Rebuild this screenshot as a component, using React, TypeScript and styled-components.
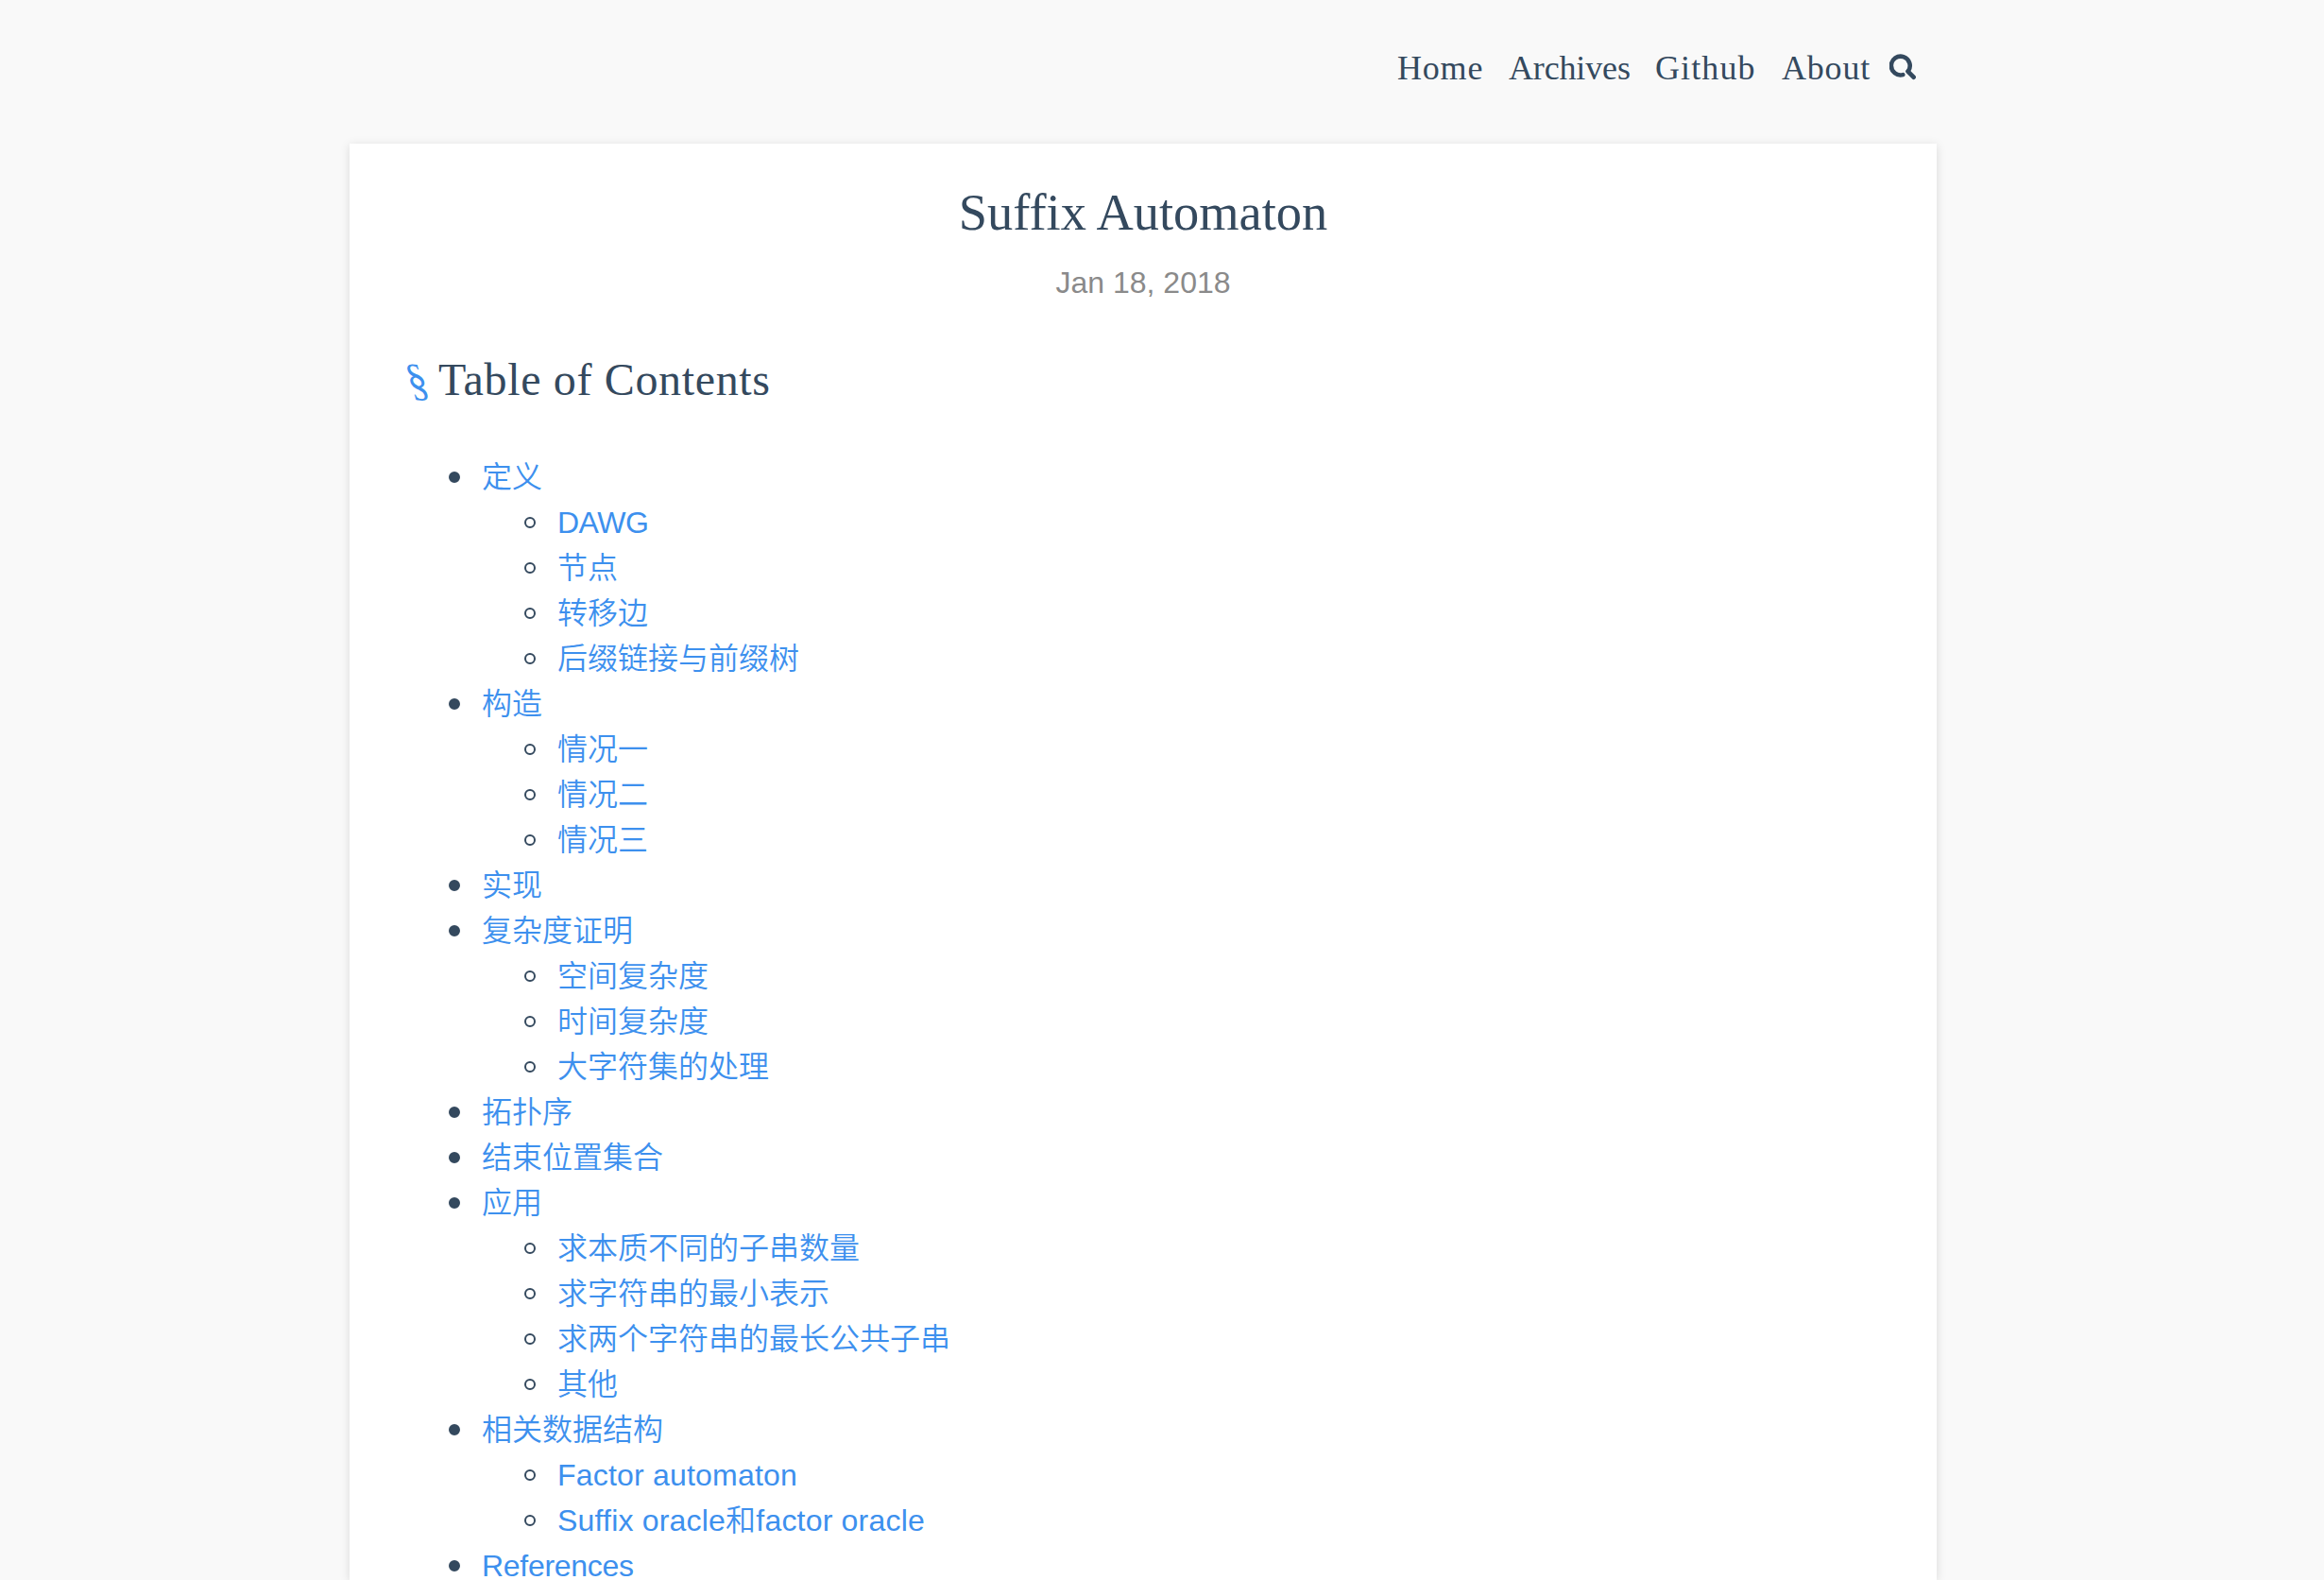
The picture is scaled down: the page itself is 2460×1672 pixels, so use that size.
import React from "react";
import styled, { createGlobalStyle } from "styled-components";

const GlobalStyle = createGlobalStyle`
  html { overflow: hidden; }
  body {
    margin: 0;
    height: 1672px;
    overflow: hidden;
    background: #f9f9f9;
    color: #34495e;
    font-family: "Liberation Sans", "Noto Sans CJK SC", sans-serif;
    font-size: 32px;
    line-height: 48px;
  }
`;

const serif = `"Liberation Serif", "Noto Sans CJK SC", serif`;

const Page = styled.div`
  width: 1680px;
  height: 1672px;
  margin-left: 370px;
`;

const Header = styled.header`
  display: flex;
  justify-content: flex-end;
  align-items: flex-start;
  height: 152px;
  box-sizing: border-box;
  padding: 48px 22px 0 0;
`;

const NavLink = styled.a<{ $width: number; $tracking: number }>`
  width: ${(p) => p.$width}px;
  font-family: ${serif};
  font-size: 36px;
  letter-spacing: ${(p) => p.$tracking}px;
  white-space: nowrap;
  color: #34495e;
  text-decoration: none;
`;

const SearchButton = styled.button`
  display: flex;
  margin: 9px 0 0;
  padding: 0;
  border: 0;
  background: none;
  color: #34495e;
`;

const Card = styled.main`
  box-sizing: border-box;
  height: 1520px;
  padding: 41px 60px 0;
  background: #fff;
  box-shadow: 0 2px 10px rgba(0, 0, 0, 0.13);
`;

const Title = styled.h1`
  margin: 0;
  font-family: ${serif};
  font-size: 54.4px;
  font-weight: 400;
  line-height: 64px;
  text-align: center;
`;

const PostDate = styled.div`
  margin-top: 18px;
  color: #8a8a8a;
  text-align: center;
`;

const SectionHeading = styled.h2`
  display: flex;
  margin: 47px 0 0;
  font-family: ${serif};
  font-size: 48px;
  font-weight: 400;
  line-height: 64px;
  letter-spacing: 0.65px;
`;

const Anchor = styled.span`
  width: 34px;
  color: #3d90ee;
`;

const SectionSign = styled.span`
  display: inline-block;
  transform: translateX(-1px) skewX(16deg) scaleX(0.88);
  transform-origin: 50% 50%;
`;

const List = styled.ul<{ $root?: boolean }>`
  list-style: none;
  margin: ${(p) => (p.$root ? "46px 0 0" : "0")};
  padding: 0 0 0 ${(p) => (p.$root ? 45 : 80)}px;
`;

const Row = styled.div<{ $nested?: boolean }>`
  display: flex;
  align-items: center;
  height: 48px;
  &::before {
    content: "";
    box-sizing: border-box;
    width: 12px;
    height: 12px;
    margin: 1px 23px 0 0;
    border: 2px solid #34495e;
    border-radius: 50%;
    background: ${(p) => (p.$nested ? "transparent" : "#34495e")};
  }
`;

const Link = styled.a<{ $tracking?: number }>`
  padding-top: 2px;
  color: #3d90ee;
  font-weight: 350;
  letter-spacing: ${(p) => (p.$tracking ? `${p.$tracking}px` : "normal")};
  text-decoration: none;
  white-space: nowrap;
`;

type Item = { label: string; tracking?: number };
type Entry = Item & { children?: Item[] };

const items = (...labels: string[]): Item[] => labels.map((label) => ({ label }));

const contents: Entry[] = [
  {
    label: "定义",
    children: [{ label: "DAWG", tracking: -0.5 }, ...items("节点", "转移边", "后缀链接与前缀树")],
  },
  { label: "构造", children: items("情况一", "情况二", "情况三") },
  { label: "实现" },
  { label: "复杂度证明", children: items("空间复杂度", "时间复杂度", "大字符集的处理") },
  { label: "拓扑序" },
  { label: "结束位置集合" },
  {
    label: "应用",
    children: items("求本质不同的子串数量", "求字符串的最小表示", "求两个字符串的最长公共子串", "其他"),
  },
  {
    label: "相关数据结构",
    children: [
      { label: "Factor automaton", tracking: 0.2 },
      { label: "Suffix oracle和factor oracle", tracking: 0.2 },
    ],
  },
  { label: "References", tracking: -0.3 },
];

const nav = [
  { label: "Home", width: 118, tracking: 0.8 },
  { label: "Archives", width: 155, tracking: -0.15 },
  { label: "Github", width: 134, tracking: 1.1 },
  { label: "About", width: 114, tracking: 0.8 },
];

export default function App() {
  return (
    <>
      <GlobalStyle />
      <Page>
        <Header>
          {nav.map((n) => (
            <NavLink key={n.label} $width={n.width} $tracking={n.tracking}>
              {n.label}
            </NavLink>
          ))}
          <SearchButton aria-label="Search">
            <svg width="28" height="28" viewBox="0 0 28 28" fill="none" stroke="currentColor" strokeLinecap="round">
              <path d="M14.3 22.1A9.9 9.9 0 1 1 19.9 18.2" strokeWidth="4.6" />
              <path d="M19.6 18.6L25.6 24.6" strokeWidth="4.8" />
            </svg>
          </SearchButton>
        </Header>
        <Card>
          <Title>Suffix Automaton</Title>
          <PostDate>Jan 18, 2018</PostDate>
          <SectionHeading>
            <Anchor>
              <SectionSign>§</SectionSign>
            </Anchor>
            Table of Contents
          </SectionHeading>
          <List $root>
            {contents.map((entry) => (
              <li key={entry.label}>
                <Row>
                  <Link $tracking={entry.tracking}>{entry.label}</Link>
                </Row>
                {entry.children && (
                  <List>
                    {entry.children.map((child) => (
                      <li key={child.label}>
                        <Row $nested>
                          <Link $tracking={child.tracking}>{child.label}</Link>
                        </Row>
                      </li>
                    ))}
                  </List>
                )}
              </li>
            ))}
          </List>
        </Card>
      </Page>
    </>
  );
}
